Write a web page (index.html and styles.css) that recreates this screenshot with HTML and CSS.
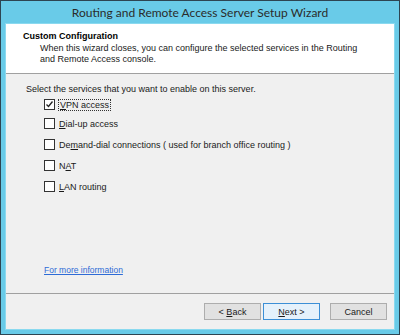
FILE: index.html
```html
<!DOCTYPE html>
<html lang="en">
<head>
    <meta charset="UTF-8">
    <title>Routing and Remote Access Server Setup Wizard</title>
    <link rel="stylesheet" href="styles.css">
</head>
<body>
    <div class="window">
        <div class="titlebar">Routing and Remote Access Server Setup Wizard</div>
        <div class="client">
            <div class="header">
                <div class="header-title">Custom Configuration</div>
                <div class="header-text">When this wizard closes, you can configure the selected services in the Routing<br>and Remote Access console.</div>
            </div>
            <div class="content">
                <div class="intro">Select the services that you want to enable on this server.</div>
                <div class="options">
                    <label class="option first">
                        <span class="box checked">
                            <svg width="9" height="9" viewBox="0 0 9 9"><path d="M1.5 4.5 L3.5 6.5 L7.5 1.5" fill="none" stroke="#222" stroke-width="1.3"/></svg>
                        </span>
                        <span class="label focus"><u>V</u>PN access</span>
                    </label>
                    <label class="option">
                        <span class="box"></span>
                        <span class="label"><u>D</u>ial-up access</span>
                    </label>
                    <label class="option">
                        <span class="box"></span>
                        <span class="label">De<u>m</u>and-dial connections ( used for branch office routing )</span>
                    </label>
                    <label class="option">
                        <span class="box"></span>
                        <span class="label">N<u>A</u>T</span>
                    </label>
                    <label class="option">
                        <span class="box"></span>
                        <span class="label"><u>L</u>AN routing</span>
                    </label>
                </div>
                <a class="more" href="#">For more information </a>
            </div>
            <div class="footer">
                <button class="btn">&lt; <u>B</u>ack</button>
                <button class="btn default"><u>N</u>ext &gt;</button>
                <button class="btn cancel">Cancel</button>
            </div>
        </div>
    </div>
</body>
</html>
```

FILE: styles.css
```css
html,
body {
    margin: 0;
    padding: 0;
}

body {
    font-family: 'Liberation Sans', Arial, sans-serif;
    font-size: 9px;
    color: #1a1a1a;
}

.window {
    width: 400px;
    height: 335px;
    box-sizing: border-box;
    border: 1px solid #2d4552;
    background: #69cbe8;
    display: flex;
    flex-direction: column;
    padding: 0 5px 5px 5px;
}

.titlebar {
    height: 23px;
    line-height: 24px;
    text-align: center;
    font-family: Lato, 'Liberation Sans', sans-serif;
    font-size: 12px;
    color: #2b2b2b;
}

.client {
    flex: 1;
    display: flex;
    flex-direction: column;
    background: #f0f0f0;
    box-shadow: 0 0 0 1px #8ad9ef;
}

.header {
    height: 50px;
    box-sizing: border-box;
    background: #fff;
    border-bottom: 1px solid #a0a0a0;
    padding: 6px 0 0 17px;
}

.header-title {
    font-weight: bold;
    color: #000;
    line-height: 12px;
}

.header-text {
    padding-left: 17px;
    line-height: 11px;
    margin-top: 1px;
}

.content {
    flex: 1;
    padding: 10px 0 0 20px;
    display: flex;
    flex-direction: column;
    border-bottom: 1px solid #a0a0a0;
}

.intro {
    line-height: 11px;
}

.options {
    display: flex;
    flex-direction: column;
    gap: 10px;
    padding: 4px 0 0 18px;
}

.option {
    display: flex;
    align-items: center;
    gap: 4px;
    height: 11px;
}

.option.first {
    margin-bottom: -2px;
}

.box {
    width: 9px;
    height: 9px;
    border: 1px solid #333;
    background: #fff;
    display: flex;
    align-items: center;
    justify-content: center;
}

.label u,
.btn u {
    text-decoration: underline;
}

.label.focus {
    outline: 1px dotted #333;
    outline-offset: 0;
    padding: 0 1px;
}

.more {
    margin-top: auto;
    margin-bottom: 18px;
    margin-left: 18px;
    font-size: 8.5px;
    color: #2e6bd6;
    text-decoration: underline;
    align-self: flex-start;
}

.footer {
    height: 35px;
    display: flex;
    align-items: center;
    justify-content: flex-end;
    padding-right: 7px;
    gap: 2px;
}

.btn {
    width: 57px;
    height: 17px;
    padding: 0;
    font-family: inherit;
    font-size: 9px;
    color: #1a1a1a;
    background: #e1e1e1;
    border: 1px solid #adadad;
}

.btn.default {
    border-color: #3c8fd6;
    background: #e5f1fb;
}

.btn.cancel {
    margin-left: 8px;
}
```
